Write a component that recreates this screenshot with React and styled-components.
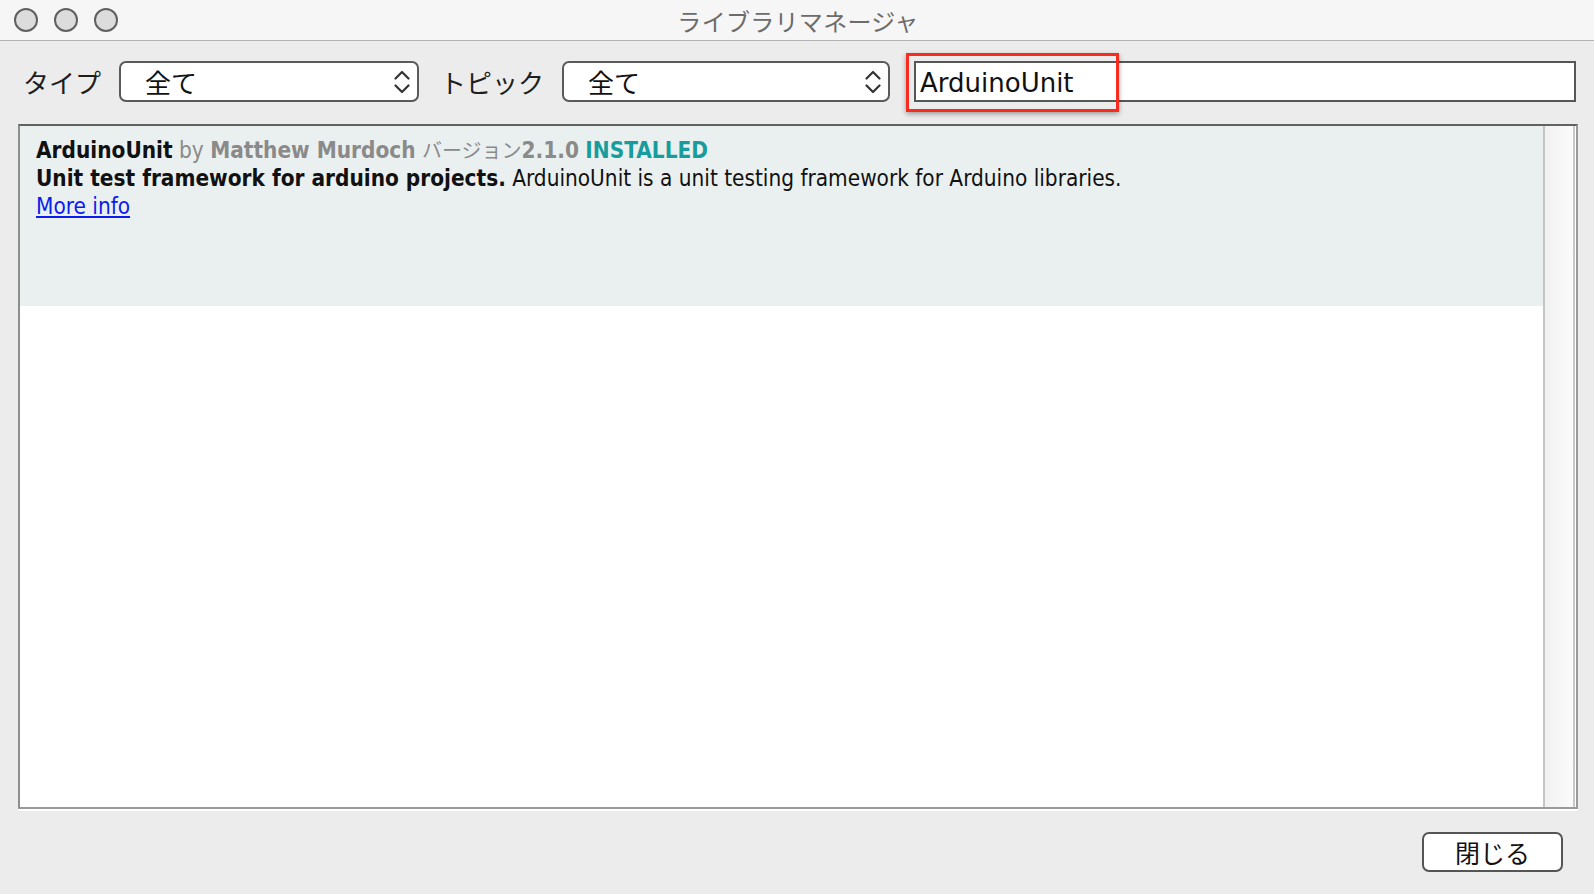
import React from 'react';
import styled, { createGlobalStyle } from 'styled-components';

const GlobalStyle = createGlobalStyle`
  html, body {
    margin: 0;
    padding: 0;
    background: #ececec;
  }
  * {
    box-sizing: border-box;
  }
`;

const Window = styled.div`
  width: 1594px;
  height: 894px;
  display: flex;
  flex-direction: column;
  background: #ececec;
  font-family: "DejaVu Sans", "Noto Sans CJK JP", sans-serif;
  overflow: hidden;
`;

const TitleBar = styled.div`
  height: 41px;
  flex-shrink: 0;
  display: grid;
  grid-template-columns: 1fr auto 1fr;
  align-items: center;
  background: #f6f6f6;
  border-bottom: 1px solid #b2b2b2;
`;

const Lights = styled.div`
  display: flex;
  gap: 16px;
  padding-left: 14px;
`;

const Light = styled.span`
  width: 24px;
  height: 24px;
  border-radius: 50%;
  background: #dcdcdc;
  border: 2px solid #606060;
`;

const Title = styled.div`
  font-family: "Noto Sans CJK JP", sans-serif;
  font-size: 24px;
  color: #6c6c6c;
  letter-spacing: 0.3px;
  padding-left: 2px;
`;

const Toolbar = styled.div`
  display: flex;
  align-items: center;
  padding: 20px 18px 22px 23px;
  flex-shrink: 0;
`;

const Label = styled.span`
  font-family: "Noto Sans CJK JP", sans-serif;
  font-size: 26px;
  color: #1e1e1e;
  margin-left: ${(p) => p.$offset || 0}px;
  margin-right: 18px;
  white-space: nowrap;
`;

const Select = styled.div`
  width: ${(p) => p.$width}px;
  height: 41px;
  flex-shrink: 0;
  display: flex;
  align-items: center;
  justify-content: space-between;
  padding: 0 7px 0 24px;
  background: #fff;
  border: 2px solid #5a5a5a;
  border-radius: 7px;
  font-family: "Noto Sans CJK JP", sans-serif;
  font-size: 26px;
  color: #111;
`;

const SearchWrap = styled.div`
  position: relative;
  flex: 1;
  margin-left: 24px;
`;

const SearchInput = styled.div`
  height: 41px;
  display: flex;
  align-items: center;
  padding: 2px 0 0 4px;
  background: #fff;
  border: 2px solid #565656;
  font-family: "DejaVu Sans", sans-serif;
  font-size: 26px;
  color: #111;
`;

const Highlight = styled.div`
  position: absolute;
  left: -8px;
  top: -8px;
  width: 213px;
  height: 59px;
  border: 3px solid #f72b1e;
  box-shadow: 0 2px 5px rgba(0, 0, 0, 0.35);
  pointer-events: none;
`;

const ListPanel = styled.div`
  flex: 1;
  display: flex;
  margin: 0 16px 0 18px;
  background: #fff;
  border-top: 2px solid #626262;
  border-left: 2px solid #8e8e8e;
  border-right: 2px solid #9a9a9a;
  border-bottom: 2px solid #9a9a9a;
  box-shadow: 0 2px 0 #fff;
`;

const ListBody = styled.div`
  flex: 1;
  background: #fff;
`;

const Scrollbar = styled.div`
  width: 32px;
  flex-shrink: 0;
  margin-right: 1px;
  background: linear-gradient(to right, #f1f1f1, #fbfbfb);
  border-left: 2px solid #c4c4c4;
  border-right: 2px solid #c8c8c8;
`;

const Row = styled.div`
  height: 180px;
  padding: 10px 15px 0 16px;
  background: #eaf0f0;
  font-family: "DejaVu Sans Condensed", "DejaVu Sans", "Noto Sans CJK JP", sans-serif;
  font-size: 22.4px;
  line-height: 28px;
  color: #111;
`;

const Line = styled.div`
  white-space: nowrap;
`;

const Name = styled.b`
  color: #111;
`;

const Muted = styled.span`
  color: #8a8a8a;
  font-weight: ${(p) => (p.$bold ? 700 : 400)};
`;

const Jp = styled.span`
  font-family: "Noto Sans CJK JP", sans-serif;
  font-size: 20px;
  color: #8a8a8a;
`;

const Installed = styled.b`
  color: #189c9e;
`;

const MoreInfo = styled.a`
  color: #0a1cf0;
  text-decoration: underline;
`;

const Footer = styled.div`
  height: 85px;
  flex-shrink: 0;
  display: flex;
  justify-content: flex-end;
  align-items: flex-start;
  padding: 23px 31px 0 0;
`;

const Button = styled.div`
  width: 141px;
  height: 40px;
  display: flex;
  align-items: center;
  justify-content: center;
  background: #fff;
  border: 2px solid #555;
  border-radius: 7px;
  font-family: "Noto Sans CJK JP", sans-serif;
  font-size: 25px;
  color: #111;
`;

function Chevrons() {
  return (
    <svg width="16" height="26" viewBox="0 0 16 26" fill="none">
      <path d="M1.5 9.5 L8 3 L14.5 9.5" stroke="#333" strokeWidth="2.2" strokeLinecap="round" strokeLinejoin="round" />
      <path d="M1.5 16.5 L8 23 L14.5 16.5" stroke="#333" strokeWidth="2.2" strokeLinecap="round" strokeLinejoin="round" />
    </svg>
  );
}

export default function App() {
  return (
    <>
      <GlobalStyle />
      <Window>
        <TitleBar>
          <Lights>
            <Light />
            <Light />
            <Light />
          </Lights>
          <Title>ライブラリマネージャ</Title>
          <div />
        </TitleBar>

        <Toolbar>
          <Label>タイプ</Label>
          <Select $width={300}>
            <span>全て</span>
            <Chevrons />
          </Select>
          <Label $offset={21}>トピック</Label>
          <Select $width={328}>
            <span>全て</span>
            <Chevrons />
          </Select>
          <SearchWrap>
            <SearchInput>ArduinoUnit</SearchInput>
            <Highlight />
          </SearchWrap>
        </Toolbar>

        <ListPanel>
          <ListBody>
            <Row>
              <Line>
                <Name>ArduinoUnit</Name> <Muted>by</Muted> <Muted $bold>Matthew Murdoch</Muted>{' '}
                <Jp>バージョン</Jp>
                <Muted $bold>2.1.0</Muted> <Installed>INSTALLED</Installed>
              </Line>
              <Line>
                <b>Unit test framework for arduino projects.</b> ArduinoUnit is a unit testing framework for Arduino libraries.
              </Line>
              <Line>
                <MoreInfo href="#">More info</MoreInfo>
              </Line>
            </Row>
          </ListBody>
          <Scrollbar />
        </ListPanel>

        <Footer>
          <Button>閉じる</Button>
        </Footer>
      </Window>
    </>
  );
}
